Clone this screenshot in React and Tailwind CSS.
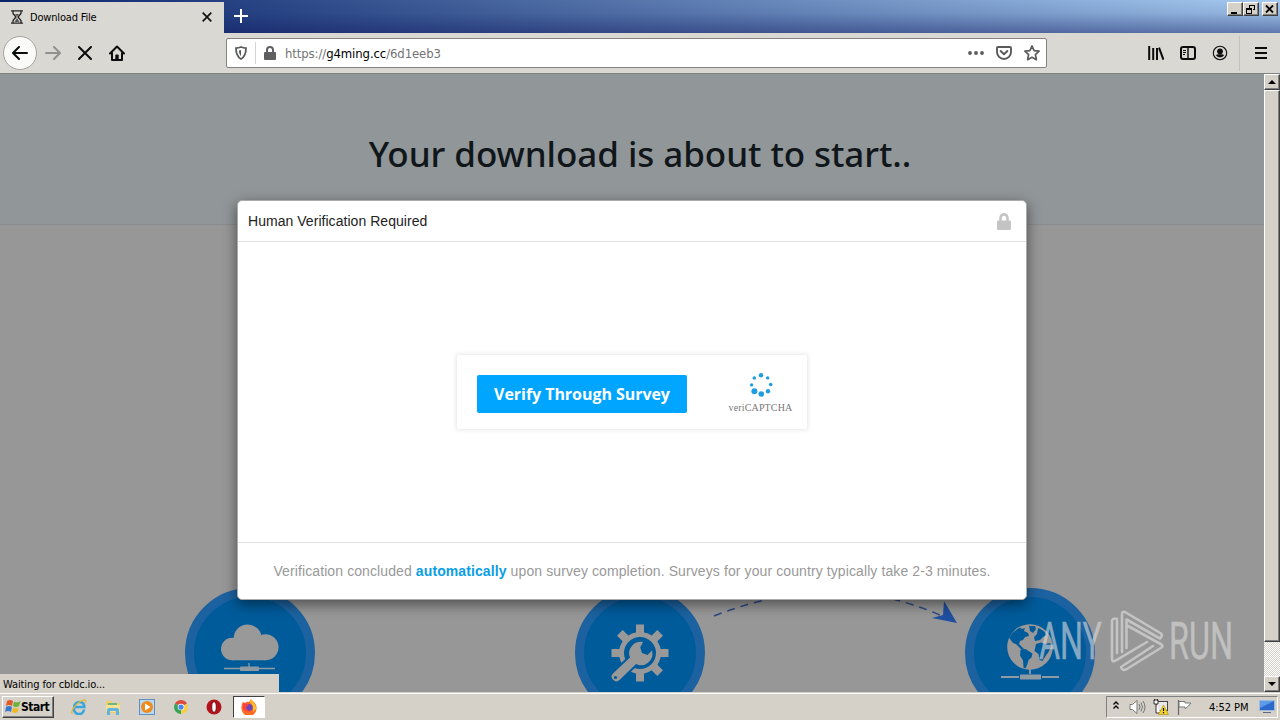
import { FaLock } from 'react-icons/fa';

const TAHOMA = "font-['DejaVu_Sans_Condensed','DejaVu_Sans',sans-serif]";
const RAISED = 'bg-[#d5d1c8] border border-t-white border-l-white border-b-[#404040] border-r-[#404040] shadow-[inset_-1px_-1px_0_#808080]';

const WindowButton = ({ children, className = '' }) => (
  <button className={`flex h-[14px] w-4 items-center justify-center ${RAISED} ${className}`}>
    <svg width="12" height="11" viewBox="0 0 12 11" fill="none" stroke="#000" shapeRendering="crispEdges">{children}</svg>
  </button>
);

const TitleBar = () => (
  <div className="flex h-[33px] shrink-0 bg-[linear-gradient(to_bottom,rgba(10,30,100,0)_0%,rgba(10,30,100,0.1)_40%,rgba(10,20,90,0.45)_100%),linear-gradient(to_right,#0a246a,#a6caf0)]">
    <div className="mt-0.5 flex w-[224px] items-center bg-[#dad8d2] pl-[11px]">
      <svg width="12" height="14" viewBox="0 0 12 14" fill="none" stroke="#222" strokeWidth="1.3" className="-mt-0.5">
        <path d="M0 .8h12M0 13.2h12M2 1v2.4L5 7 2 10.600V13M10 1v2.400L7 7l3 3.600V13" />
        <path d="M4 4h4L6 6.500zM6 8l2.500 4h-5z" fill="#555" stroke="none" />
      </svg>
      <span className={`mt-px ml-[7px] text-[11px] tracking-[-0.18px] text-black ${TAHOMA}`}>Download File</span>
      <svg className="-mt-0.5 mr-3 ml-auto" width="10" height="10" viewBox="0 0 10 10" stroke="#111" strokeWidth="1.7">
        <path d="M.7.7l8.600 8.600M9.300.7L.7 9.300" />
      </svg>
    </div>
    <svg className="mt-[9px] ml-[10px]" width="14" height="14" viewBox="0 0 14 14" stroke="#fff" strokeWidth="2">
      <path d="M7 0v14M0 7h14" />
    </svg>
    <div className="mt-0.5 mr-0.5 ml-auto flex">
      <WindowButton><path d="M2 8.500h6" strokeWidth="2" /></WindowButton>
      <WindowButton>
        <path d="M4 1.500h6M4.500 1v3M9.500 1v5M8 5.500h2M1 4.500h6M1 5.500h6M1.500 4v5M6.500 4v5M1 9.500h6" />
      </WindowButton>
      <WindowButton className="ml-[3px]"><path d="M2 1.500l7 7M9 1.500l-7 7" strokeWidth="1.800" shapeRendering="auto" /></WindowButton>
    </div>
  </div>
);

const Toolbar = () => (
  <div className="flex h-10 shrink-0 items-center bg-[#dad8d2]">
    <div className="ml-[3px] flex h-[34px] w-[34px] items-center justify-center rounded-full border border-[#a5a39e] bg-[#fafaf9]">
      <svg width="16" height="14" viewBox="0 0 16 14" fill="none" stroke="#0c0c0d" strokeWidth="2" strokeLinecap="round" strokeLinejoin="round">
        <path d="M15 7H1.500M7 1L1 7l6 6" />
      </svg>
    </div>
    <svg className="ml-2" width="16" height="14" viewBox="0 0 16 14" fill="none" stroke="#92918d" strokeWidth="2" strokeLinecap="round" strokeLinejoin="round">
      <path d="M1 7h13.500M9 1l6 6-6 6" />
    </svg>
    <svg className="ml-[17px]" width="14" height="14" viewBox="0 0 14 14" stroke="#0c0c0d" strokeWidth="2" strokeLinecap="round">
      <path d="M1 1l12 12M13 1L1 13" />
    </svg>
    <svg className="ml-[17px]" width="16" height="16" viewBox="0 0 16 16" fill="none" stroke="#0c0c0d" strokeWidth="2" strokeLinecap="round" strokeLinejoin="round">
      <path d="M1 8.500L8 1.500l7 7M3 8v7h10V8" />
      <path d="M6.300 15v-4.500q0-1 1-1h1.400q1 0 1 1V15z" fill="#0c0c0d" stroke="none" />
    </svg>

    {/* Address bar */}
    <div className="ml-[101px] flex h-[30px] w-[821px] items-center rounded-[2px] border border-[#85837f] bg-white">
      <svg className="ml-2" width="12" height="14" viewBox="0 0 12 14" fill="none" stroke="#5a5a5c" strokeWidth="1.800">
        <path d="M6 1c2 .8 3.500 1 5 1.100 0 5-.6 8.700-5 10.900C1.600 10.800 1 7.100 1 2.100 2.500 2 4 1.800 6 1z" />
        <path d="M6 4v6c-1.500-1.200-2-3-2-5.400z" fill="#5a5a5c" stroke="none" />
      </svg>
      <div className="ml-2 h-[22px] w-px bg-[#d4d4d4]" />
      <svg className="ml-2" width="12" height="14" viewBox="0 0 12 14">
        <path d="M3 7V4a3 3 0 016 0v3" fill="none" stroke="#5f5f61" strokeWidth="2" />
        <rect y="6" width="12" height="8" rx="1" fill="#5f5f61" />
      </svg>
      <span className={`mt-0.5 ml-[9px] text-[13px] tracking-[-0.1px] text-[#737373] ${TAHOMA}`}>
        https://<span className="text-black">g4ming.cc</span>/6d1eeb3
      </span>
      <div className="mr-[6px] ml-auto flex items-center">
        <svg width="16" height="4" viewBox="0 0 16 4" fill="#5a5a5c">
          <circle cx="2" cy="2" r="1.900" /><circle cx="8" cy="2" r="1.900" /><circle cx="14" cy="2" r="1.900" />
        </svg>
        <svg className="ml-3" width="16" height="14" viewBox="0 0 16 14" fill="none" stroke="#5a5a5c" strokeWidth="1.900" strokeLinecap="round" strokeLinejoin="round">
          <path d="M2 1h12q1 0 1 1v4a7 7 0 01-14 0V2q0-1 1-1z" />
          <path d="M4.600 5L8 8.200 11.400 5" />
        </svg>
        <svg className="ml-3" width="16" height="16" viewBox="0 0 16 16" fill="none" stroke="#5a5a5c" strokeWidth="1.700" strokeLinejoin="round">
          <path d="M8 1l2.100 4.700 5 .5-3.700 3.500 1 5L8 12.300 3.600 14.700l1-5L.9 6.200l5-.5z" />
        </svg>
      </div>
    </div>

    <div className="ml-auto flex h-full items-center">
      <svg width="16" height="14" viewBox="0 0 16 14" fill="none" stroke="#0c0c0d" strokeWidth="2">
        <path d="M1.200 0v14M5.200 2v12M9 2v12M11 1.600l4.400 12" />
      </svg>
      <svg className="ml-4" width="16" height="14" viewBox="0 0 16 14" fill="none" stroke="#0c0c0d">
        <rect x="1" y="1" width="14" height="12" rx="2" strokeWidth="2" />
        <path d="M8 1v12" strokeWidth="1.400" />
        <path d="M3 4.500h3M3 6.500h3M3 8.500h2" />
      </svg>
      <svg className="ml-4" width="16" height="16" viewBox="0 0 16 16" fill="#0c0c0d">
        <circle cx="8" cy="8" r="6.700" fill="none" stroke="#0c0c0d" strokeWidth="1.100" />
        <circle cx="8" cy="6.300" r="2.900" />
        <path d="M3.800 10q1.300-.8 2.500-.8h3.400q1.200 0 2.500.8Q11 12.400 8 12.400T3.800 10z" />
      </svg>
      <div className="ml-[11px] h-[35px] w-px bg-[#c4c2bd]" />
      <svg className="mr-[13px] ml-[15px]" width="12" height="12" viewBox="0 0 12 12" stroke="#0c0c0d" strokeWidth="2">
        <path d="M0 1h12M0 6h12M0 11h12" />
      </svg>
    </div>
  </div>
);

const StepCircle = ({ children }) => (
  <div className="flex h-[130px] w-[130px] items-center justify-center rounded-full border-[9px] border-[#1c62a0] bg-[#005b9b]">
    <svg className="shrink-0" width="60" height="60" viewBox="0 0 60 60">{children}</svg>
  </div>
);

const CloudIcon = () => (
  <>
    <g fill="#999">
      <circle cx="12.300" cy="26" r="11.300" />
      <circle cx="27.700" cy="15.500" r="14" />
      <circle cx="45.500" cy="24.300" r="13" />
      <path d="M12 20h34v17.300H12z" />
    </g>
    <path d="M29 40v4M4 45.500h17M39 45.500h16" stroke="#8f9aa3" strokeWidth="1.300" />
    <rect x="20" y="43.500" width="19" height="4.500" rx="1" fill="#8f9aa3" />
  </>
);

const GearIcon = () => (
  <>
    <g fill="#999">
      {[0, 45, 90, 135, 180, 225, 270, 315].map((a) => (
        <path key={a} d="M26 1.500h8v10h-8z" transform={`rotate(${a} 30 30)`} />
      ))}
    </g>
    <circle cx="30" cy="30" r="18.5" fill="none" stroke="#999" strokeWidth="5" />
    {/* Wrench with a halo in the disc colour */}
    <path
      d="M33 19A11.500 11.500 0 0020 34.500L3 50.500a4.600 4.600 0 006.500 6.500L26 41A11.500 11.500 0 0042 27.500L37.500 32l-5.500-2-1.800-5.500z"
      fill="#999" stroke="#005b9b" strokeWidth="4" paintOrder="stroke"
    />
    <circle cx="5.500" cy="54.500" r="1.600" fill="#005b9b" />
  </>
);

const GlobeIcon = () => (
  <>
    <circle cx="30" cy="24" r="22.800" fill="#999" />
    <g fill="#005b9b">
      <path d="M9 15q4-7 11-10.500l2 1.500 3-1-1 3 4 2 1 3-4 1-2 3-3 1-1 3 3 3 3 3-4-1-5-5-3-1-3-4z" />
      <path d="M20.500 26.500l5-.5 3 2 4 2.500-1 4-3 2.500-1 4-2 4.500-2-1-.5-7-3-5z" />
      <path d="M29 3l6 0 1 3-3 4-3-2zM38 5q6 2 9 7l-4 2-3 3-5 1-1-4 3-3z" />
      <path d="M36 21l5-1.500 4 1.500 5-1 1.500 3-3 6-3 4-3 5-3-1-1-6-4-3z" />
    </g>
    <path d="M30 46v5M1 54h18M42 54h17" stroke="#8f9aa3" strokeWidth="1.800" />
    <rect x="20" y="51.500" width="21" height="5" rx=".5" fill="#8f9aa3" />
  </>
);

const Spinner = () => (
  <svg className="-mt-0.5" width="26" height="26" viewBox="0 0 26 26" fill="#1f9de0">
    <circle cx="13" cy="3.200" r="2.200" />
    <circle cx="19.700" cy="5.900" r="1.700" />
    <circle cx="22.700" cy="12.500" r="1.800" />
    <circle cx="20" cy="19.300" r="2.200" />
    <circle cx="13.300" cy="22" r="2.800" />
    <circle cx="6.400" cy="19.200" r="3" />
    <circle cx="3.600" cy="12.900" r="1.700" />
    <circle cx="6.300" cy="6" r="1.800" />
  </svg>
);

const VerificationModal = () => (
  <div className="absolute top-[126px] left-[237px] flex h-[400px] w-[790px] flex-col rounded-[5px] border border-[#aaa] bg-white font-['Liberation_Sans',Arial,sans-serif] shadow-[0_4px_14px_rgba(0,0,0,0.5)]">
    <div className="flex h-[41px] items-center justify-between border-b border-[#e2e2e2] pr-[15px] pl-[10px]">
      <h2 className="text-[14px] tracking-[0.04px] text-[#222]">Human Verification Required</h2>
      <FaLock className="h-[17px] w-[14px] text-[#c4c4c4]" preserveAspectRatio="none" />
    </div>
    <div className="flex flex-1 items-center justify-center">
      <div className="flex h-[74px] w-[350px] items-center rounded-[2px] pt-[3px] pl-5 shadow-[0_0_4px_1px_rgba(0,0,0,0.1)]">
        <button className="h-[38px] w-[210px] rounded-[2px] bg-[#00a5ff] font-['Open_Sans','Noto_Sans',sans-serif] text-[16px] font-bold tracking-[-0.05px] text-white">
          Verify Through Survey
        </button>
        <div className="ml-[40px] flex w-[67px] flex-col items-center">
          <Spinner />
          <span className="mt-[4px] font-['Liberation_Serif',serif] text-[10px] leading-[12px] tracking-[0.15px] whitespace-nowrap text-[#777]">veriCAPTCHA</span>
        </div>
      </div>
    </div>
    <div className="flex h-[57px] items-center justify-center border-t border-[#e2e2e2] text-[14px] tracking-[0.1px] whitespace-pre text-[#999]">
      Verification concluded <b className="text-[#0a9ee5]">automatically</b> upon survey completion. Surveys for your country typically take 2-3 minutes.
    </div>
  </div>
);

const Watermark = () => (
  <svg className="absolute top-[532px] left-[1034px] overflow-visible opacity-60" width="202" height="74" viewBox="0 0 202 74">
    <g fill="#dcdcdc" stroke="#dcdcdc" strokeWidth=".4" fontFamily="Roboto, sans-serif" fontSize="51" fontWeight="400">
      <text x="5" y="53" textLength="63" lengthAdjust="spacingAndGlyphs">ANY</text>
      <text x="135" y="53" textLength="64" lengthAdjust="spacingAndGlyphs">RUN</text>
    </g>
    {/* Two interlocking play triangles */}
    <g fill="none" stroke="#e2e2e2" strokeWidth="2.600" strokeLinejoin="round" strokeLinecap="round">
      <path d="M92.500 42V13.500L126 32.500q3-3 1-5L91 6q-3-1-3 2v38" />
      <path d="M83 13q-5-1.500-5 2.500v37q0 4 3.500 2.200L113 36M83 15V47" />
      <path d="M94 20L127.500 38.500q2 1.500 0 3L92 63.500q-4 1.500-5-2.500L119 40" />
    </g>
  </svg>
);

const Scrollbar = () => (
  <div className="flex w-4 shrink-0 flex-col bg-[#ebe9e4]">
    <div className={`flex h-4 items-center justify-center ${RAISED}`}>
      <svg width="8" height="4" viewBox="0 0 8 4"><path d="M4 0l4 4H0z" /></svg>
    </div>
    <div className={`h-[552px] ${RAISED}`} />
    <div className="flex-1 bg-[repeating-conic-gradient(#d5d1c8_0_25%,#fff_0_50%)] bg-[length:2px_2px]" />
    <div className={`flex h-4 items-center justify-center ${RAISED}`}>
      <svg width="8" height="4" viewBox="0 0 8 4"><path d="M0 0h8L4 4z" /></svg>
    </div>
  </div>
);

const Page = () => (
  <div className="relative flex h-[619px] shrink-0 overflow-hidden border-t border-[#7d7f80]">
    <div className="relative flex-1 overflow-hidden bg-[#979797]">
      <div className="flex h-[151px] w-[1280px] items-center justify-center border-b border-[#898c8e] bg-[#919699] pt-[10px]">
        <h1 className="font-['Noto_Sans','Open_Sans',sans-serif] text-[35px] font-medium tracking-[-0.07px] whitespace-nowrap text-[#10161a]">
          Your download is about to start..
        </h1>
      </div>
      <div className="flex w-[1280px] justify-center gap-[260px] pt-[363px]">
        <StepCircle><CloudIcon /></StepCircle>
        <StepCircle><GearIcon /></StepCircle>
        <StepCircle><GlobeIcon /></StepCircle>
      </div>
      <svg className="absolute top-[496px] left-[710px]" width="250" height="60" viewBox="0 0 250 60" fill="none">
        <path d="M4 46Q125 -2 232 46" stroke="#2c4a85" strokeWidth="1.500" strokeDasharray="8 6" />
        <path d="M234 31l13 22-25-5 11-3z" fill="#1f4f9f" />
      </svg>
    </div>
    <Scrollbar />
    <VerificationModal />
    <Watermark />
    <div className={`absolute bottom-0 left-0 flex h-[18px] w-[279px] items-center bg-[#d5d1c8] pt-[4px] pl-[3px] text-[11px] tracking-[-0.1px] text-black ${TAHOMA}`}>
      Waiting for cbldc.io...
    </div>
  </div>
);

const WindowsFlag = () => (
  <svg width="16" height="15" viewBox="0 0 16 15">
    <path d="M2 2q3-2 6 0L7 7Q4 5 1 7z" fill="#e4572a" />
    <path d="M9 2.500q3 2 6.500-.5L14 7q-3 2-6 0z" fill="#69b13b" />
    <path d="M1 8q3-2 6 0l-1 5q-3-2-6 0z" fill="#3a78d0" />
    <path d="M8 8.500q3 2 6 0L12.500 13q-3 2-5.500 0z" fill="#f3b820" />
  </svg>
);

const Taskbar = () => (
  <div className={`flex h-7 shrink-0 items-center border-t border-[#d5d1c8] bg-[#d5d1c8] shadow-[inset_0_1px_0_#fff] ${TAHOMA}`}>
    <button className={`ml-0.5 flex h-[22px] w-[52px] items-center pl-0.5 ${RAISED}`}>
      <WindowsFlag />
      <span className="text-[12px] font-bold tracking-[-0.5px] text-black">Start</span>
    </button>
    <div className="ml-[17px] flex items-center gap-[18px]">
      {/* Internet Explorer */}
      <svg width="16" height="16" viewBox="0 0 16 16" fill="none">
        <path d="M13 10.500A5 5 0 113.500 8h9.800q0-5-5-5a5 5 0 00-5 5" stroke="#38a5df" strokeWidth="2.600" />
        <path d="M1.500 15C-1 13 4 5 10 2q6-3 4.500 2" stroke="#e8b72b" strokeWidth="1.200" />
      </svg>
      {/* Explorer */}
      <svg width="16" height="16" viewBox="0 0 16 16">
        <path d="M1 2h6l1 2h7v10H1z" fill="#f0cf68" />
        <path d="M3 4h9v4H3z" fill="#69b883" />
        <path d="M1 6h14v7H1z" fill="#f7e294" />
        <path d="M2 16v-5q0-2 2-2h8q2 0 2 2v5h-3v-4H5v4z" fill="#62b4e0" />
      </svg>
      {/* Media player */}
      <svg width="16" height="16" viewBox="0 0 16 16">
        <rect x=".5" y=".5" width="15" height="15" fill="#b9d8f2" stroke="#5d8fc0" />
        <circle cx="8" cy="8" r="6" fill="#f08a1c" />
        <path d="M6 4.500l5.500 3.500L6 11.500z" fill="#fff" />
      </svg>
      {/* Chrome */}
      <svg width="14" height="14" viewBox="0 0 16 16" className="ml-px">
        <path d="M8 8L1.100 4A8 8 0 0114.900 4z" fill="#dd4b3e" />
        <path d="M8 8l6.900-4A8 8 0 018 16z" fill="#f7cf43" />
        <path d="M8 8v8A8 8 0 011.100 4z" fill="#36a35b" />
        <circle cx="8" cy="8" r="3.800" fill="#fff" /><circle cx="8" cy="8" r="3" fill="#4a85ec" />
      </svg>
      {/* Opera */}
      <svg width="16" height="16" viewBox="0 0 16 16">
        <circle cx="8" cy="8" r="7.500" fill="#b5131c" />
        <ellipse cx="8" cy="8" rx="2.300" ry="5.300" fill="#fff" stroke="#790b12" />
      </svg>
    </div>
    <div className="ml-[11px] flex h-[22px] w-8 items-center justify-center border border-t-[#404040] border-r-white border-b-white border-l-[#404040] bg-white">
      {/* Firefox */}
      <svg width="16" height="16" viewBox="0 0 16 16">
        <path d="M2 3l2 1q2-2 4-1l2-3q1 2 3 3 3 3 2.500 7A7.500 7.500 0 01.5 9Q0 6 2 3z" fill="#ff6b24" />
        <path d="M10 0q1 2 3 4 2 2 2 6l-3 3V7L9 3z" fill="#ffc42d" />
        <circle cx="8" cy="8.500" r="3.600" fill="#6a45bd" />
        <path d="M2 4q3 0 6 2L5 8q1 4 5 4-5 2-8-2z" fill="#fb443e" />
      </svg>
    </div>

    {/* Notification area */}
    <div className="mr-[2px] ml-auto flex h-[22px] w-[172px] items-center border border-t-[#808080] border-r-white border-b-white border-l-[#808080] pl-[6px]">
      <svg className="-mt-0.5" width="6" height="9" viewBox="0 0 6 9" fill="none" stroke="#000" strokeWidth="1.300"><path d="M.5 3.500L3 1l2.500 2.500M.5 7.500L3 5l2.500 2.500" /></svg>
      <svg className="ml-[10px]" width="17" height="16" viewBox="0 0 17 16" fill="none" stroke="#777">
        <path d="M1 5.500h2.500L8 1.500v13L3.500 10.500H1z" fill="#fff" />
        <path d="M10 5q2 3 0 6M12 3.500q3 4.500 0 9M14 2q4 6 0 12" />
      </svg>
      <svg className="ml-[7px]" width="16" height="16" viewBox="0 0 16 16">
        <rect x="3.500" y="2.500" width="11" height="9" fill="#e8e8e8" stroke="#444" />
        <path d="M1 1h4v4H1zM3 5v9h5M1.500 0v2M4.500 0v2" fill="#fff" stroke="#333" />
        <path d="M10.500 6l5 9.500h-10z" fill="#f5d32a" stroke="#a98d0b" strokeWidth=".6" />
        <path d="M10.500 9v3M10.500 13v1.200" stroke="#000" strokeWidth="1.200" />
      </svg>
      <svg className="ml-[7px]" width="17" height="16" viewBox="0 0 17 16">
        <path d="M2.500 1v15" stroke="#666" strokeWidth="1.200" />
        <path d="M3 2.500h6V4h6l-2.500 3-3 2.500H9V8H3z" fill="#fff" stroke="#777" />
      </svg>
      <span className="mt-[3px] ml-[16px] text-[11px] tracking-[-0.05px] whitespace-nowrap text-black">4:52 PM</span>
      <svg className="mr-0.5 ml-auto shrink-0" width="16" height="14" viewBox="0 0 16 14">
        <rect x=".5" y=".5" width="15" height="10" fill="#2c69cc" stroke="#9eb9dc" />
        <path d="M1 1h14L1 8z" fill="#5d9be8" />
        <path d="M4 12.500h8" stroke="#5a6c88" />
      </svg>
    </div>
  </div>
);

export default function App() {
  return (
    <div className="flex h-[720px] w-[1280px] flex-col overflow-hidden bg-[#d5d1c8]">
      <TitleBar />
      <Toolbar />
      <Page />
      <Taskbar />
    </div>
  );
}
